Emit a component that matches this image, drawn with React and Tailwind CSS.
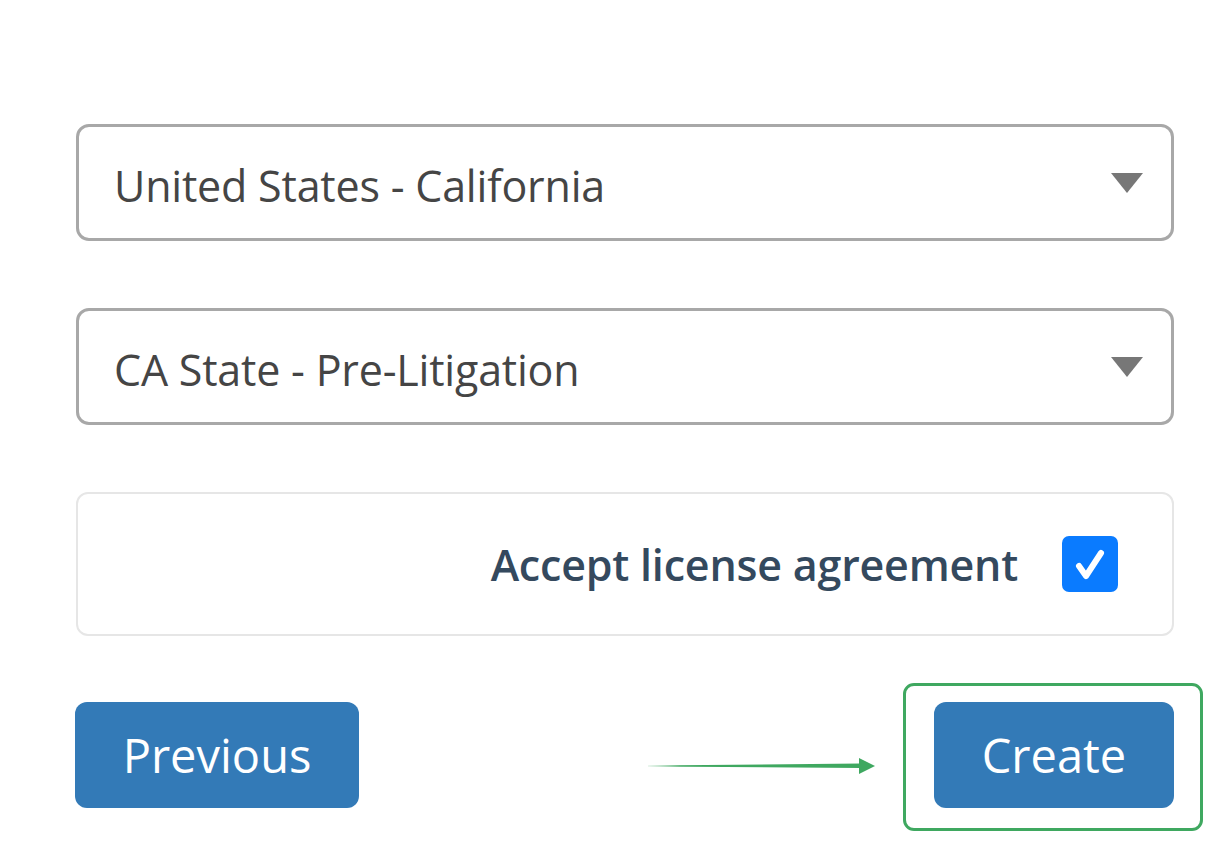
import React from 'react';

const font = { fontFamily: '"Open Sans", "Noto Sans", sans-serif' };

function SelectBox({ value }) {
  return (
    <div className="h-[117px] border-[3px] border-[#a8a8a8] rounded-[13px] bg-white flex items-center justify-between pl-[35px] pr-[28px]">
      <span className="text-[43px] text-[#454545] leading-none tracking-[-0.2px] mt-[5px]">{value}</span>
      <svg width="32" height="20" viewBox="0 0 32 20">
        <path d="M0 0 L32 0 L16 20 Z" fill="#777777" />
      </svg>
    </div>
  );
}

export default function App() {
  return (
    <div className="w-[1224px] h-[854px] bg-white relative" style={font}>
      <div className="pt-[124px] pl-[76px] w-[1174px] flex flex-col">
        <SelectBox value="United States - California" />
        <div className="h-[67px]" />
        <SelectBox value="CA State - Pre-Litigation" />
        <div className="h-[67px]" />
        <div className="h-[144px] border-2 border-[#e6e6e6] rounded-[12px] flex items-center justify-end pr-[54px] gap-[44px]">
          <span className="text-[43px] font-semibold text-[#34495e] leading-none tracking-[-0.2px]">
            Accept license agreement
          </span>
          <div className="w-[56px] h-[56px] rounded-[7px] bg-[#0a7bff] flex items-center justify-center">
            <svg width="38" height="38" viewBox="0 0 38 38">
              <path
                d="M8 21 L15 31 L30 8"
                fill="none"
                stroke="#ffffff"
                strokeWidth="6"
                strokeLinecap="round"
                strokeLinejoin="round"
              />
            </svg>
          </div>
        </div>
        <div className="h-[66px]" />
        <div className="flex justify-between -ml-px">
          <button className="w-[284px] h-[106px] bg-[#337ab7] rounded-[12px] text-white text-[47px] leading-none">
            Previous
          </button>
          <button className="w-[240px] h-[106px] bg-[#337ab7] rounded-[12px] text-white text-[47px] leading-none">
            Create
          </button>
        </div>
      </div>

      {/* annotation: highlight box + arrow */}
      <div className="absolute left-[903px] top-[683px] w-[300px] h-[148px] border-[3px] border-[#3fa860] rounded-[11px]" />
      <svg className="absolute left-[645px] top-[755px]" width="232" height="22" viewBox="0 0 232 22">
        <defs>
          <linearGradient id="fade" x1="0" x2="1" y1="0" y2="0">
            <stop offset="0" stopColor="#3fa860" stopOpacity="0.2" />
            <stop offset="0.15" stopColor="#3fa860" stopOpacity="1" />
          </linearGradient>
        </defs>
        <path d="M3 10.5 L216 8.5 L216 13 L3 11.5 Z" fill="url(#fade)" />
        <path d="M214 3 L230 11 L214 19 Z" fill="#3fa860" />
      </svg>
    </div>
  );
}
